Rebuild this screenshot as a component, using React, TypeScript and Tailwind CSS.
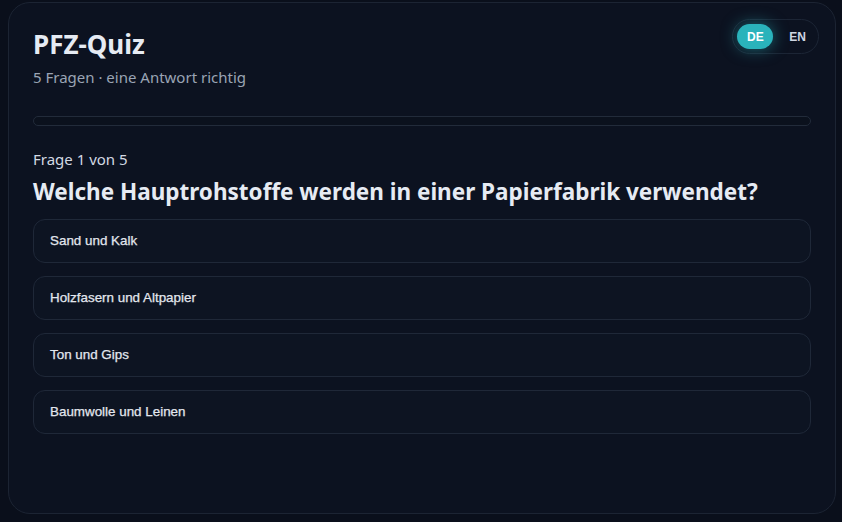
const options = [
  "Sand und Kalk",
  "Holzfasern und Altpapier",
  "Ton und Gips",
  "Baumwolle und Leinen",
];

export default function App() {
  return (
    <div className="min-h-screen w-full bg-[#0a0f1b] pt-0.5 pl-2">
      <div
        className="relative w-[828px] h-[512px] rounded-[22px] border border-[#1c2433] bg-[#0c1220] px-6 pt-6"
        style={{ fontFamily: '"Noto Sans", "Open Sans", sans-serif' }}
      >
        {/* Language toggle */}
        <div className="absolute top-4 right-4 flex items-center rounded-full border border-[#1c2535] p-1 pr-3">
          <button className="h-[25px] w-9 rounded-full bg-[#2ab3bb] text-[12px] font-bold text-white shadow-[0_0_16px_rgba(42,179,187,0.55)] font-['Liberation_Sans',sans-serif]">
            DE
          </button>
          <span className="ml-[16px] text-[12px] font-bold text-[#cfd6e2] font-['Liberation_Sans',sans-serif]">
            EN
          </span>
        </div>

        <h1 className="text-[26px] leading-[34px] font-bold text-[#e6ebf3]">PFZ-Quiz</h1>
        <p className="mt-[5px] text-[15px] leading-[22px] text-[#9aa4b4]">
          5 Fragen · eine Antwort richtig
        </p>

        {/* Progress */}
        <div className="mt-7 h-2.5 w-full rounded-full border border-[#222b3a] bg-[#0b111d]" />

        <p className="mt-[22px] text-[15px] leading-[22px] text-[#d3d9e3]">Frage 1 von 5</p>
        <h2 className="mt-[7px] text-[22.5px] leading-[30px] font-bold text-[#e6ebf3]">
          Welche Hauptrohstoffe werden in einer Papierfabrik verwendet?
        </h2>

        <div className="mt-[12px] flex flex-col gap-[13px]">
          {options.map((o) => (
            <button
              key={o}
              className="h-11 w-full rounded-xl border border-[#1f2838] bg-[#0d1422] px-4 text-left text-[13.4px] font-medium text-[#e3e7ee] [-webkit-text-stroke:0.25px_#e3e7ee] font-['Liberation_Sans',sans-serif]"
            >
              {o}
            </button>
          ))}
        </div>
      </div>
    </div>
  );
}
